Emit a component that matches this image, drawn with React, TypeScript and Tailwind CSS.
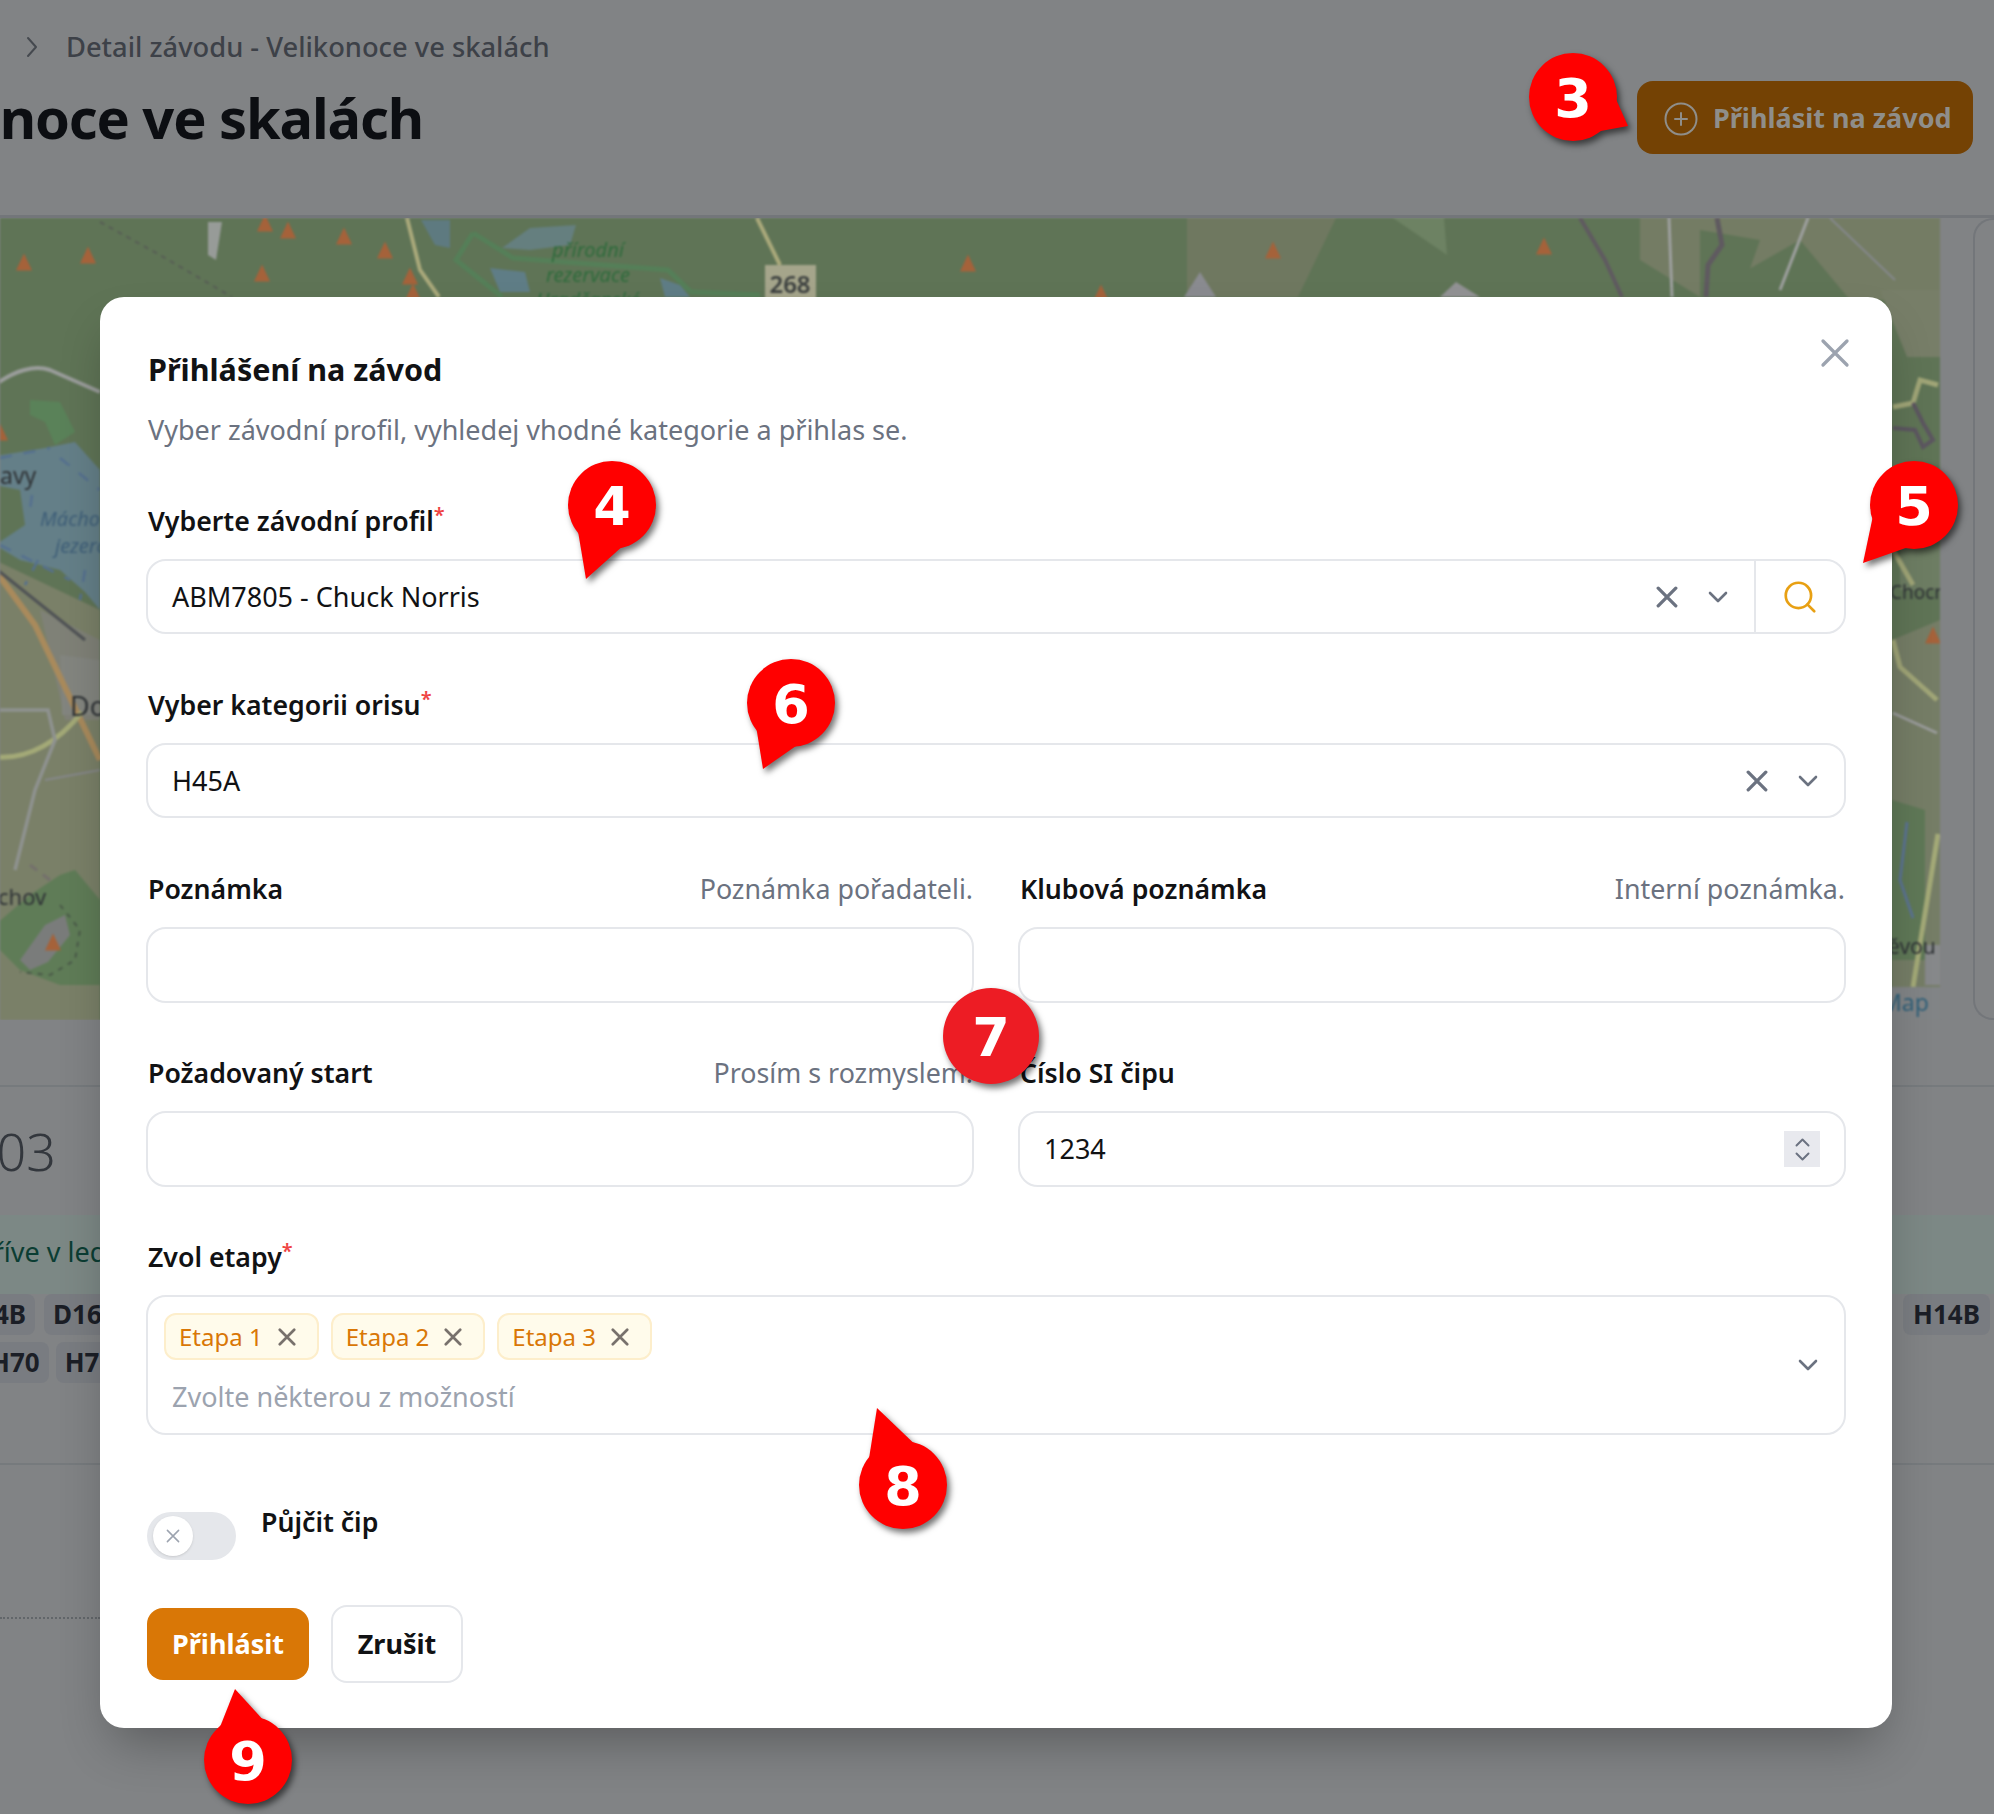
import React from "react";
import { Search } from "lucide-react";

const font = "font-['Noto_Sans',sans-serif]";

function CloseIcon({ size = 20, width = 3, className = "" }: { size?: number; width?: number; className?: string }) {
  return (
    <svg width={size} height={size} viewBox="0 0 20 20" fill="none" className={className}>
      <path d="M2 2 18 18M18 2 2 18" stroke="currentColor" strokeWidth={width} strokeLinecap="round" />
    </svg>
  );
}

function Chevron({ up = false, size = 20, className = "" }: { up?: boolean; size?: number; className?: string }) {
  return (
    <svg width={size} height={size * 0.6} viewBox="0 0 20 12" fill="none" className={className}>
      <path d={up ? "M2 10 10 2l8 8" : "M2 2l8 8 8-8"} stroke="currentColor" strokeWidth="2.6" strokeLinecap="round" strokeLinejoin="round" />
    </svg>
  );
}

function Label({ text, required, hint }: { text: string; required?: boolean; hint?: string }) {
  return (
    <div className="mb-[18px] flex h-[40px] items-center justify-between pl-[2px] pr-[1px]">
      <span className="text-[26.7px] font-semibold text-[#111214]">
        {text}
        {required && <span className="relative -top-[9px] text-[20px] leading-none text-[#ef4444]">*</span>}
      </span>
      {hint && <span className="text-[26.8px] text-[#6b7280]">{hint}</span>}
    </div>
  );
}

function Select({ value, search }: { value: string; search?: boolean }) {
  return (
    <div className="flex h-[75px] items-center rounded-[20px] border-2 border-[#e5e7eb] bg-white">
      <span className="flex-1 pl-[24px] pt-[2px] text-[27px] text-[#111214]">{value}</span>
      <CloseIcon size={22} className="text-[#6b7280]" />
      <Chevron className="ml-[30px] mr-[26px] text-[#6b7280]" />
      {search && (
        <div className="flex h-full w-[90px] items-center justify-center border-l-2 border-[#e5e7eb]">
          <Search size={38} strokeWidth={1.7} className="text-[#e8a013]" />
        </div>
      )}
    </div>
  );
}

function Tag({ text }: { text: string }) {
  return (
    <div className="flex h-[47px] items-center gap-[15px] rounded-[12px] border-2 border-[#fdeecb] bg-[#fffbeb] pl-[13px] pr-[21px] text-[24px] text-[#d97706]">
      {text}
      <CloseIcon size={18} className="text-[#78716c]" />
    </div>
  );
}

function Pin({ n, tip, className, color = "#ff0000", r = 44 }: { n: string; tip?: [number, number]; className: string; color?: string; r?: number }) {
  let tail = null;
  if (tip) {
    const len = Math.hypot(tip[0], tip[1]);
    const ux = tip[0] / len;
    const uy = tip[1] / len;
    const a = `${ux * 24 - uy * 30},${uy * 24 + ux * 30}`;
    const b = `${ux * 24 + uy * 30},${uy * 24 - ux * 30}`;
    tail = <polygon points={`${tip[0]},${tip[1]} ${a} ${b}`} fill={color} />;
  }
  return (
    <svg
      width="200"
      height="200"
      viewBox="-100 -100 200 200"
      className={`absolute drop-shadow-[3px_4px_3px_rgba(0,0,0,0.55)] ${className}`}
    >
      {tail}
      <circle r={r} fill={color} />
      <text y="20" textAnchor="middle" fill="#fff" fontSize="54" fontWeight="700" fontFamily="'DejaVu Sans', sans-serif">
        {n}
      </text>
    </svg>
  );
}

function MapLayer() {
  const tri = (x: number, y: number, w = 8, h = 17) => `${x},${y - h / 2} ${x + w},${y + h / 2} ${x - w},${y + h / 2}`;
  const triangles: [number, number][] = [
    [24, 262], [88, 255], [265, 223], [288, 230], [344, 236], [385, 250], [262, 273], [410, 276], [413, 292], [968, 263],
    [1273, 250], [1544, 246], [1101, 293], [1933, 635], [53, 942], [0, 432],
  ];
  return (
    <svg width="1940" height="802" viewBox="0 218 1940 802" className="block blur-[1px]">
      <rect x="-5" y="213" width="1950" height="812" fill="#5f7456" />
      {/* olive patches, top right */}
      <polygon points="1187,218 1336,218 1298,297 1187,297" fill="#6f7860" />
      <polygon points="1393,218 1444,218 1447,255" fill="#6d8263" />
      <polygon points="1640,218 1940,218 1940,300 1850,300 1800,240 1700,297 1640,260" fill="#747c64" />
      <polygon points="1700,230 1760,240 1740,297 1700,297" fill="#5f7456" />
      <polygon points="1880,290 1940,290 1940,357 1907,357" fill="#777e68" />
      <polygon points="1892,640 1940,620 1940,1020 1892,1020" fill="#757d66" />
      <polygon points="1892,800 1925,810 1925,960 1892,960" fill="#5f7857" />
      <polygon points="1900,520 1940,500 1940,590 1900,590" fill="#6d7d63" />
      {/* land south of the lake */}
      <polygon points="-5,560 100,610 100,1025 -5,1025" fill="#7a8068" />
      <polygon points="40,610 100,640 100,720 65,720" fill="#7f8177" />
      <polygon points="60,655 100,660 100,715 62,715" fill="#83857f" />
      {/* lake */}
      <polygon points="-5,456 45,448 75,442 100,470 100,610 85,592 60,570 20,560 -5,545 25,525 20,490 -5,485" fill="#647f88" />
      <path d="M0,458 50,448M60,458 100,490M32,495 30,510M38,560 25,585M0,545 70,580M85,570 80,600" stroke="#55708f" strokeWidth="2.5" strokeDasharray="12 12" fill="none" />
      <polygon points="30,400 60,402 75,432 55,445 45,422 30,415" fill="#5a8259" />
      {/* roads */}
      <path d="M-5,385 C15,370 35,365 50,370 L100,392" stroke="#9a9d9b" strokeWidth="4" fill="none" />
      <path d="M-5,570 L35,625 100,760" stroke="#a98a5c" strokeWidth="6" fill="none" />
      <path d="M-5,568 L85,640" stroke="#4f5255" strokeWidth="3" fill="none" />
      <path d="M-5,757 C30,760 60,740 82,712" stroke="#a3a977" strokeWidth="5" fill="none" />
      <path d="M-5,710 H48 L55,740 35,790 15,870" stroke="#8f9290" strokeWidth="3.5" fill="none" />
      <path d="M45,780 100,770" stroke="#86888a" strokeWidth="2" fill="none" />
      {/* forest and hill in the south west */}
      <polygon points="-5,925 30,895 60,875 75,870 100,900 100,985 60,985 20,970 -5,945" fill="#5f7c57" />
      <polygon points="20,960 45,925 65,915 70,935 48,962 30,970" fill="#7a7c7b" />
      <path d="M60,905 80,930 75,960 50,975 20,972" stroke="#4a5a48" strokeWidth="2" strokeDasharray="5 6" fill="none" />
      <path d="M30,865 50,880" stroke="#74706c" strokeWidth="3" strokeDasharray="9 7" fill="none" />
      {/* top strip */}
      <path d="M100,222 160,255 232,297" stroke="#575e55" strokeWidth="2" strokeDasharray="5 5" fill="none" />
      <polygon points="208,222 222,222 216,260 208,255" fill="#979b98" />
      <path d="M407,218 420,270 439,297" stroke="#aaa97b" strokeWidth="4" fill="none" />
      <path d="M757,218 780,265" stroke="#aaa97b" strokeWidth="4" fill="none" />
      <path d="M473,233 456,260 502,297M473,233 513,258 668,270 691,292 760,295" stroke="#557f58" strokeWidth="5" fill="none" />
      <polygon points="421,220 450,220 450,248 435,245" fill="#5e7a80" />
      <polygon points="502,248 530,228 576,225 570,245 530,250" fill="#657f7f" />
      <polygon points="490,268 525,272 530,292 500,292" fill="#5f7d86" />
      <polygon points="660,278 680,285 690,297 665,297" fill="#5f7d86" />
      <rect x="765" y="265" width="51" height="34" fill="#a5a58b" />
      <text x="790" y="293" textAnchor="middle" fontSize="24" fontWeight="600" fill="#3b3f3e" fontFamily="'Noto Sans', sans-serif">268</text>
      <text x="588" y="257" textAnchor="middle" fontSize="20" fontStyle="italic" fill="#2f6b3c" fontFamily="'Noto Sans', sans-serif">přírodní</text>
      <text x="588" y="282" textAnchor="middle" fontSize="20" fontStyle="italic" fill="#2f6b3c" fontFamily="'Noto Sans', sans-serif">rezervace</text>
      <text x="588" y="307" textAnchor="middle" fontSize="20" fontStyle="italic" fill="#2f6b3c" fontFamily="'Noto Sans', sans-serif">Hradčanské</text>
      <polygon points="1184,297 1200,272 1216,297" fill="#8a8b90" />
      <polygon points="1440,297 1456,282 1480,297" fill="#929294" />
      <path d="M1580,218 1605,260 1622,297" stroke="#5f5a60" strokeWidth="4" fill="none" />
      <path d="M1717,218 1722,245 1708,265 1706,297" stroke="#5f5a60" strokeWidth="5" fill="none" />
      <path d="M1669,218 1672,297" stroke="#9ea09f" strokeWidth="3" fill="none" />
      <path d="M1808,218 1780,290" stroke="#9ea09f" strokeWidth="3" fill="none" />
      <path d="M1830,218 1895,280" stroke="#85888b" strokeWidth="2" fill="none" />
      {/* right strip */}
      <path d="M1893,407 1913,403 1920,380 1938,385" stroke="#a0a577" strokeWidth="5" fill="none" />
      <path d="M1913,403 1923,423 1933,440 1923,447 1915,430 1893,428" stroke="#5c5660" strokeWidth="4" fill="none" />
      <path d="M1893,550 1913,585" stroke="#a0a577" strokeWidth="5" fill="none" />
      <path d="M1893,640 1900,667 1937,700" stroke="#a0a577" strokeWidth="5" fill="none" />
      <path d="M1893,713 1937,733" stroke="#9a9c9b" strokeWidth="3" fill="none" />
      <path d="M1907,822 1900,880 1913,918" stroke="#5b7391" strokeWidth="3" fill="none" />
      <path d="M1938,834 1913,987" stroke="#a3a977" strokeWidth="5" fill="none" />
      <polygon points="1925,945 1940,945 1940,985 1925,985" fill="#86888a" />
      {triangles.map(([x, y]) => (
        <polygon key={`${x}-${y}`} points={tri(x, y)} fill="#a5623a" />
      ))}
      {/* place names */}
      <text x="0" y="484" fontSize="23" fill="#2f3336" fontFamily="'Noto Sans', sans-serif">avy</text>
      <text x="40" y="526" fontSize="20" fontStyle="italic" fill="#3f5f78" fontFamily="'Noto Sans', sans-serif">Mácho</text>
      <text x="55" y="553" fontSize="20" fontStyle="italic" fill="#3f5f78" fontFamily="'Noto Sans', sans-serif">jezero</text>
      <text x="70" y="716" fontSize="27" fill="#2f3336" fontFamily="'Noto Sans', sans-serif">Do</text>
      <text x="-2" y="905" fontSize="22" fill="#2f3336" fontFamily="'Noto Sans', sans-serif">chov</text>
      <text x="1890" y="599" fontSize="19" fill="#2f3336" fontFamily="'Noto Sans', sans-serif">Chocr</text>
      <text x="1888" y="954" fontSize="21" fill="#2f3336" fontFamily="'Noto Sans', sans-serif">ěvou</text>
      <rect x="1880" y="987" width="65" height="38" fill="#818486" />
      <text x="1881" y="1011" fontSize="23" fill="#2f5f78" fontFamily="'Noto Sans', sans-serif">Map</text>
    </svg>
  );
}

function PageBehind() {
  return (
    <div className="h-full w-full bg-[#818385]">
      <div className="h-[218px] border-b-[3px] border-[#73767a]">
        <div className="flex h-[94px] items-center pl-[26px] text-[27.3px] font-medium text-[#3d4148]">
          <svg width="12" height="22" viewBox="0 0 12 22" fill="none" className="mr-[28px]">
            <path d="M2 2l8 9-8 9" stroke="#45494f" strokeWidth="2" strokeLinecap="round" strokeLinejoin="round" />
          </svg>
          Detail závodu - Velikonoce ve skalách
        </div>
        <div className="flex items-start justify-between pr-[21px]">
          <div className="flex w-[423px] justify-end overflow-hidden whitespace-nowrap">
            <h1 className="shrink-0 text-[56px] leading-[46px] font-bold tracking-[-0.02em] text-[#0c0e12]">Velikonoce ve skalách</h1>
          </div>
          <div className="-mt-[13px] flex h-[73px] w-[336px] items-center rounded-[16px] bg-[#744204] pl-[27px] pt-[2px] text-[27px] font-bold text-[#8f8e8a]">
            <svg width="34" height="34" viewBox="0 0 34 34" fill="none" className="mr-[15px]">
              <circle cx="17" cy="17" r="15.5" stroke="#8f8e8a" strokeWidth="2" />
              <path d="M17 11v12M11 17h12" stroke="#8f8e8a" strokeWidth="2" strokeLinecap="round" />
            </svg>
            Přihlásit na závod
          </div>
        </div>
      </div>
      <div className="flex h-[802px] overflow-hidden">
        <MapLayer />
        <div className="ml-[33px] flex-1 rounded-l-[20px] border-2 border-r-0 border-[#73767a]" />
      </div>
      <div className="mt-[65px] h-[378px] border-t-2 border-[#767a7d]">
        <div className="flex h-[128px] w-[56px] items-center justify-end overflow-hidden whitespace-nowrap">
          <span className="shrink-0 text-[52px] font-light text-[#33373d]">103</span>
        </div>
        <div className="flex h-[79px] items-start bg-[#7c8885] pt-[18px] text-[27px] leading-[38px] whitespace-nowrap text-[#0b3d33]">
          <div className="flex w-[123px] justify-end overflow-hidden">
            <span className="shrink-0">dříve v ledu</span>
          </div>
        </div>
        <div className="flex justify-between pr-[4px] text-[26px] font-bold text-[#1b1e26]">
          <div className="flex w-[110px] flex-col gap-[7px] overflow-hidden">
            <div className="-ml-[49px] flex gap-[9px]">
              <span className="h-[41px] rounded-[8px] bg-[#797c81] px-[9px] leading-[41px]">D14B</span>
              <span className="h-[41px] rounded-[8px] bg-[#797c81] px-[9px] leading-[41px]">D16A</span>
            </div>
            <div className="-ml-[19px] flex gap-[7px]">
              <span className="h-[41px] rounded-[8px] bg-[#797c81] px-[9px] leading-[41px]">H70</span>
              <span className="h-[41px] rounded-[8px] bg-[#797c81] px-[9px] leading-[41px]">H75</span>
            </div>
          </div>
          <span className="h-[41px] rounded-[8px] bg-[#797c81] px-[10px] leading-[41px]">H14B</span>
        </div>
      </div>
      <div className="border-t-2 border-[#767a7d]">
        <div className="mt-[152px] w-[100px] border-t-2 border-dotted border-[#62666a]" />
      </div>
    </div>
  );
}

export default function App() {
  return (
    <div className={`relative h-[1814px] w-[1994px] overflow-hidden ${font}`}>
      <PageBehind />

      <div className="absolute left-[100px] top-[297px] w-[1792px] rounded-[24px] bg-white px-[46px] pb-[45px] pt-[50px] shadow-[0_25px_50px_-12px_rgba(0,0,0,0.3)]">
        <button className="absolute right-[42px] top-[41px] text-[#9ca3af]">
          <CloseIcon size={30} width={2.2} />
        </button>
        <h2 className="h-[46px] pl-[2px] text-[30.5px] leading-[44px] font-bold text-[#111214]">Přihlášení na závod</h2>
        <p className="mt-[17px] h-[40px] pl-[2px] text-[27px] leading-[40px] text-[#6b7280]">
          Vyber závodní profil, vyhledej vhodné kategorie a přihlas se.
        </p>

        <div className="mt-[51px]">
          <Label text="Vyberte závodní profil" required />
          <Select value="ABM7805 - Chuck Norris" search />
        </div>

        <div className="mt-[51px]">
          <Label text="Vyber kategorii orisu" required />
          <Select value="H45A" />
        </div>

        <div className="mt-[51px] grid grid-cols-2 gap-x-[44px] gap-y-[50px]">
          <div>
            <Label text="Poznámka" hint="Poznámka pořadateli." />
            <div className="h-[76px] rounded-[20px] border-2 border-[#e5e7eb]" />
          </div>
          <div>
            <Label text="Klubová poznámka" hint="Interní poznámka." />
            <div className="h-[76px] rounded-[20px] border-2 border-[#e5e7eb]" />
          </div>
          <div>
            <Label text="Požadovaný start" hint="Prosím s rozmyslem." />
            <div className="h-[76px] rounded-[20px] border-2 border-[#e5e7eb]" />
          </div>
          <div>
            <Label text="Číslo SI čipu" />
            <div className="flex h-[76px] items-center justify-between rounded-[20px] border-2 border-[#e5e7eb] pl-[24px] pr-[24px] text-[27px] text-[#111214]">
              <span>1234</span>
              <div className="flex h-[36px] w-[36px] flex-col items-center justify-center gap-[5px] bg-[#e8e9ee] text-[#6b7280]">
                <Chevron up size={15} />
                <Chevron size={15} />
              </div>
            </div>
          </div>
        </div>

        <div className="mt-[50px]">
          <Label text="Zvol etapy" required />
          <div className="flex h-[140px] items-center justify-between rounded-[20px] border-2 border-[#e5e7eb] pl-[16px] pr-[26px]">
            <div className="flex flex-col">
              <div className="-mt-[3px] flex gap-[12px]">
                <Tag text="Etapa 1" />
                <Tag text="Etapa 2" />
                <Tag text="Etapa 3" />
              </div>
              <span className="mt-[17px] -mb-[3px] pl-[8px] text-[27px] leading-[40px] text-[#9ca3af]">Zvolte některou z možností</span>
            </div>
            <Chevron className="text-[#6b7280]" />
          </div>
        </div>

        <div className="mt-[77px] flex items-start gap-[25px]">
          <div className="ml-[1px] flex h-[48px] w-[89px] items-center rounded-full bg-[#e5e7eb] pl-[6px]">
            <div className="flex h-[40px] w-[40px] items-center justify-center rounded-full bg-white text-[#9ca3af] shadow-sm">
              <CloseIcon size={14} width={2.2} />
            </div>
          </div>
          <span className="text-[26.7px] leading-[20px] font-semibold text-[#111214]">Půjčit čip</span>
        </div>

        <div className="mt-[45px] flex items-center gap-[22px] pl-[1px]">
          <button className="h-[72px] w-[162px] rounded-[16px] bg-[#d97706] text-[27px] font-bold text-white">Přihlásit</button>
          <button className="h-[78px] w-[132px] rounded-[16px] border-2 border-[#e5e7eb] bg-white text-[27px] font-bold text-[#111214]">Zrušit</button>
        </div>
      </div>

      <Pin n="3" tip={[55, 29]} className="left-[1473px] -top-[3px]" />
      <Pin n="4" tip={[-26, 74]} className="left-[512px] top-[405px]" />
      <Pin n="5" tip={[-51, 58]} className="left-[1814px] top-[405px]" />
      <Pin n="6" tip={[-28, 66]} className="left-[691px] top-[603px]" />
      <Pin n="7" r={48} color="#ed1c24" className="left-[891px] top-[936px]" />
      <Pin n="8" tip={[-26, -77]} className="left-[803px] top-[1385px]" />
      <Pin n="9" tip={[-13, -71]} className="left-[148px] top-[1660px]" />
    </div>
  );
}
